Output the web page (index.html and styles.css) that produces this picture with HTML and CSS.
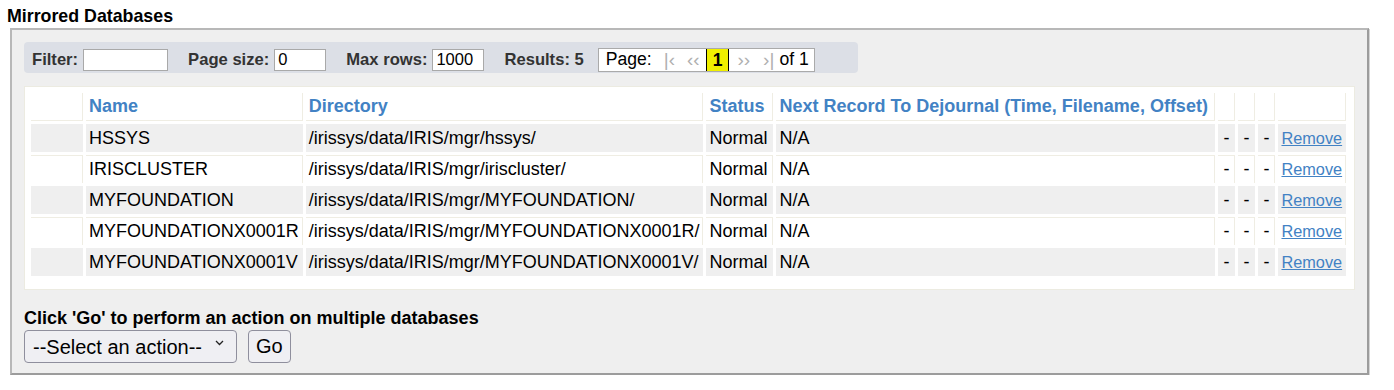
FILE: index.html
```html
<!DOCTYPE html>
<html>
<head>
    <meta charset="UTF-8">
    <link rel="stylesheet" href="styles.css">
</head>
<body>
    <div class="page-title">Mirrored Databases</div>

    <div class="panel">
        <div class="filter-bar">
            <div class="filter-group">
                <label>Filter:</label>
                <input type="text" class="filter-input">
            </div>
            <div class="filter-group">
                <label>Page size:</label>
                <input type="text" class="small-input" value="0">
            </div>
            <div class="filter-group">
                <label>Max rows:</label>
                <input type="text" class="small-input" value="1000">
            </div>
            <div class="filter-group">
                <label>Results: 5</label>
            </div>
            <div class="pager">
                <span class="pager-label">Page:</span>
                <span class="pager-arrow first">|&lsaquo;</span>
                <span class="pager-arrow prev">&lsaquo;&lsaquo;</span>
                <span class="pager-current">1</span>
                <span class="pager-arrow next">&rsaquo;&rsaquo;</span>
                <span class="pager-arrow last">&rsaquo;|</span>
                <span class="pager-of">of 1</span>
            </div>
        </div>

        <div class="table-wrap">
            <table class="db-table">
                <thead>
                    <tr>
                        <th class="col-check"></th>
                        <th>Name</th>
                        <th>Directory</th>
                        <th class="col-status">Status</th>
                        <th class="col-next">Next Record To Dejournal (Time, Filename, Offset)</th>
                        <th class="col-dash"></th>
                        <th class="col-dash"></th>
                        <th class="col-dash"></th>
                        <th class="col-link"></th>
                    </tr>
                </thead>
                <tbody>
                    <tr class="odd">
                        <td></td>
                        <td>HSSYS</td>
                        <td>/irissys/data/IRIS/mgr/hssys/</td>
                        <td>Normal</td>
                        <td>N/A</td>
                        <td class="dash">-</td>
                        <td class="dash">-</td>
                        <td class="dash">-</td>
                        <td><a href="#">Remove</a></td>
                    </tr>
                    <tr>
                        <td></td>
                        <td>IRISCLUSTER</td>
                        <td>/irissys/data/IRIS/mgr/iriscluster/</td>
                        <td>Normal</td>
                        <td>N/A</td>
                        <td class="dash">-</td>
                        <td class="dash">-</td>
                        <td class="dash">-</td>
                        <td><a href="#">Remove</a></td>
                    </tr>
                    <tr class="odd">
                        <td></td>
                        <td>MYFOUNDATION</td>
                        <td>/irissys/data/IRIS/mgr/MYFOUNDATION/</td>
                        <td>Normal</td>
                        <td>N/A</td>
                        <td class="dash">-</td>
                        <td class="dash">-</td>
                        <td class="dash">-</td>
                        <td><a href="#">Remove</a></td>
                    </tr>
                    <tr>
                        <td></td>
                        <td>MYFOUNDATIONX0001R</td>
                        <td>/irissys/data/IRIS/mgr/MYFOUNDATIONX0001R/</td>
                        <td>Normal</td>
                        <td>N/A</td>
                        <td class="dash">-</td>
                        <td class="dash">-</td>
                        <td class="dash">-</td>
                        <td><a href="#">Remove</a></td>
                    </tr>
                    <tr class="odd">
                        <td></td>
                        <td>MYFOUNDATIONX0001V</td>
                        <td>/irissys/data/IRIS/mgr/MYFOUNDATIONX0001V/</td>
                        <td>Normal</td>
                        <td>N/A</td>
                        <td class="dash">-</td>
                        <td class="dash">-</td>
                        <td class="dash">-</td>
                        <td><a href="#">Remove</a></td>
                    </tr>
                </tbody>
            </table>
        </div>

        <div class="action-title">Click 'Go' to perform an action on multiple databases</div>
        <div class="action-row">
            <span class="select-wrap">
                <select class="action-select">
                    <option>--Select an action--</option>
                </select>
                <svg class="select-chevron" width="9" height="6" viewBox="0 0 9 6">
                    <path d="M1 1 L4.5 4.5 L8 1" fill="none" stroke="#222" stroke-width="1.3"/>
                </svg>
            </span>
            <button class="go-button">Go</button>
        </div>
    </div>
</body>
</html>
```

FILE: styles.css
```css
body {
    font-family: "Liberation Sans", Arial, sans-serif;
    margin: 0;
    padding: 0 0 0 7px;
    background-color: white;
    color: black;
}
.page-title {
    font-size: 17.8px;
    font-weight: bold;
    line-height: 20px;
    height: 28px;
    padding-top: 6px;
    box-sizing: border-box;
}
.panel {
    width: 1359px;
    margin-left: 3px;
    background-color: #efefef;
    border: 2px solid #a8a8a8;
    border-color: #b8b8b8 #9c9c9c #9c9c9c #b8b8b8;
    box-shadow: 1px 1px 0 #d4d4d4;
    padding: 12px 12px 10px 12px;
    box-sizing: border-box;
}
.filter-bar {
    display: flex;
    align-items: center;
    width: 834px;
    height: 31px;
    padding: 4px 0 0 8px;
    box-sizing: border-box;
    background-color: #dcdfe6;
    border-radius: 4px;
}
.filter-group {
    display: flex;
    align-items: center;
    margin-right: 20px;
}
.filter-group label {
    font-size: 16.6px;
    font-weight: bold;
    color: #333;
    margin-right: 5px;
}
.filter-group input {
    height: 22px;
    padding: 0 3px;
    border: 1px solid #a9a9a9;
    font-family: "Liberation Sans", Arial, sans-serif;
    font-size: 16.5px;
    box-sizing: border-box;
    background: white;
}
.filter-input {
    width: 85px;
}
.small-input {
    width: 52px;
}
.pager {
    display: flex;
    align-items: center;
    height: 24px;
    margin-left: -11px;
    padding: 0 5px 0 7px;
    background: white;
    border: 1px solid #aaa;
    font-size: 17.6px;
    box-sizing: border-box;
}
.pager-label {
    margin-right: 12px;
}
.pager-arrow {
    color: #b0b0b0;
    font-size: 19px;
}
.pager-arrow.first {
    margin-right: 12px;
}
.pager-arrow.prev {
    margin-right: 6px;
}
.pager-arrow.next {
    margin-left: 8px;
    margin-right: 13px;
}
.pager-arrow.last {
    margin-right: 5px;
}
.pager-current {
    background-color: #f0f000;
    font-weight: bold;
    border-left: 1px solid black;
    border-right: 1px solid black;
    padding: 0 6px;
    line-height: 22px;
}
.table-wrap {
    margin-top: 13px;
    background: white;
    border: 1px solid #ecebe1;
    padding: 3px 3px 10px 3px;
}
.db-table {
    border-collapse: separate;
    border-spacing: 3px;
    font-size: 18px;
}
.db-table th {
    color: #4282c4;
    font-weight: bold;
    text-align: left;
    height: 27px;
    padding: 0 3px;
    border-right: 1px solid #efede3;
    border-bottom: 1px solid #efede3;
    white-space: nowrap;
}
.db-table td {
    height: 27px;
    padding: 0 3px;
    border-top: 1px solid #efede3;
    border-right: 1px solid #efede3;
    white-space: nowrap;
}
.db-table tr.odd td {
    background-color: #efefef;
    border-color: #efefef;
}
.col-check {
    width: 45px;
}
.col-status {
    width: 60px;
}
.col-next {
    width: 432px;
}
.col-dash {
    width: 10px;
}
.col-link {
    width: 60px;
}
.db-table td.dash {
    text-align: center;
}
.db-table a {
    color: #4282c4;
    font-size: 16.3px;
}
.action-title {
    margin-top: 18px;
    font-size: 18px;
    line-height: 20px;
    font-weight: bold;
}
.action-row {
    display: flex;
    align-items: center;
    margin-top: 2px;
}
.select-wrap {
    position: relative;
    display: inline-block;
    margin-right: 11px;
}
.action-select {
    appearance: none;
    -webkit-appearance: none;
    display: block;
    width: 213px;
    height: 33px;
    font-family: "Liberation Sans", Arial, sans-serif;
    font-size: 20px;
    color: black;
    background-color: #efeff3;
    border: 1px solid #8f8f9d;
    border-radius: 4px;
    padding: 0 4px 0 8px;
}
.select-chevron {
    position: absolute;
    right: 13px;
    top: 10px;
}
.go-button {
    height: 33px;
    padding: 0 7px;
    font-family: "Liberation Sans", Arial, sans-serif;
    font-size: 20px;
    background-color: #efeff3;
    border: 1px solid #8f8f9d;
    border-radius: 4px;
    color: black;
}
```
